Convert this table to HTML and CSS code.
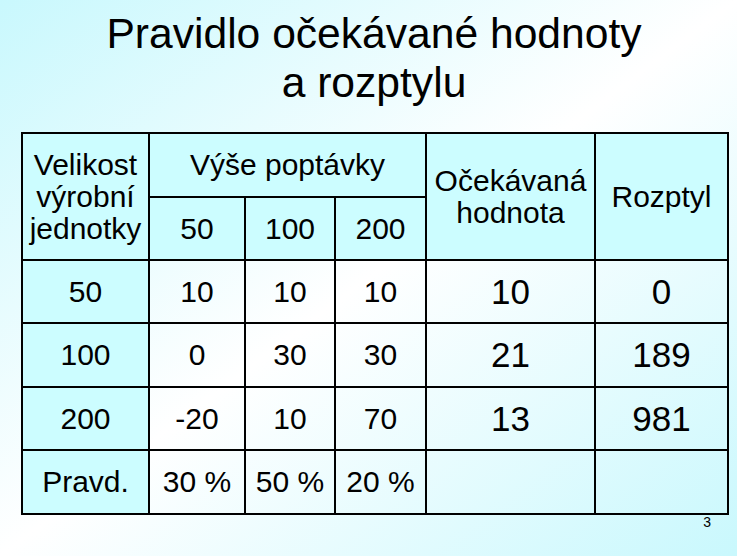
FILE: index.html
```html
<!DOCTYPE html>
<html lang="cs">
<head>
<meta charset="utf-8">
<title>Pravidlo očekávané hodnoty a rozptylu</title>
<link rel="stylesheet" href="styles.css">
</head>
<body>
<div class="slide">
  <h1 class="title">Pravidlo očekávané hodnoty<br>a rozptylu</h1>
  <table class="grid">
    <colgroup>
      <col class="c1"><col class="c2"><col class="c3"><col class="c4"><col class="c5"><col class="c6">
    </colgroup>
    <tr class="r-head1">
      <th class="hd multi" rowspan="2">Velikost<br>výrobní<br>jednotky</th>
      <th class="hd" colspan="3">Výše poptávky</th>
      <th class="hd multi" rowspan="2">Očekávaná<br>hodnota</th>
      <th class="hd" rowspan="2">Rozptyl</th>
    </tr>
    <tr class="r-head2">
      <th class="hd">50</th>
      <th class="hd">100</th>
      <th class="hd">200</th>
    </tr>
    <tr class="r-a">
      <th class="hd">50</th>
      <td>10</td><td>10</td><td>10</td>
      <td class="big">10</td><td class="big">0</td>
    </tr>
    <tr class="r-b">
      <th class="hd">100</th>
      <td>0</td><td>30</td><td>30</td>
      <td class="big">21</td><td class="big">189</td>
    </tr>
    <tr class="r-a">
      <th class="hd">200</th>
      <td>-20</td><td>10</td><td>70</td>
      <td class="big">13</td><td class="big">981</td>
    </tr>
    <tr class="r-b">
      <th class="hd">Pravd.</th>
      <td>30 %</td><td>50 %</td><td>20 %</td>
      <td class="big"></td><td class="big"></td>
    </tr>
  </table>
  <div class="page-num">3</div>
</div>
</body>
</html>
```

FILE: styles.css
```css
html, body {
  margin: 0;
  padding: 0;
}

body {
  width: 737px;
  height: 556px;
  overflow: hidden;
  background: linear-gradient(to bottom right, #c9f8fd 0%, #ffffff 50%, #c9f8fd 100%);
  font-family: "Liberation Sans", Arial, sans-serif;
  color: #000;
}

.slide {
  display: flex;
  flex-direction: column;
  padding: 9px 0 0 21px;
}

.title {
  margin: 0 10px 25px 0;
  font-weight: normal;
  font-size: 42.6px;
  line-height: 49px;
  text-align: center;
}

.grid {
  border-collapse: collapse;
  table-layout: fixed;
  width: 706px;
}

.c1 { width: 127px; }
.c2 { width: 96px; }
.c3 { width: 90px; }
.c4 { width: 91px; }
.c5 { width: 169px; }
.c6 { width: 133px; }

.grid th,
.grid td {
  border: 2px solid #000;
  padding: 0;
  text-align: center;
  vertical-align: middle;
  font-size: 30px;
  font-weight: normal;
  line-height: 34px;
}

.grid .hd {
  background: #ccfdff;
}

.grid .multi {
  line-height: 32px;
}

.grid .big {
  font-size: 35px;
}

.r-head1 { height: 64px; }
.r-head2 { height: 63px; }
.r-a { height: 63px; }
.r-b { height: 64px; }

.page-num {
  width: 706px;
  box-sizing: border-box;
  padding-right: 16px;
  text-align: right;
  font-size: 14px;
  line-height: 16px;
  margin-top: -1px;
}
```
